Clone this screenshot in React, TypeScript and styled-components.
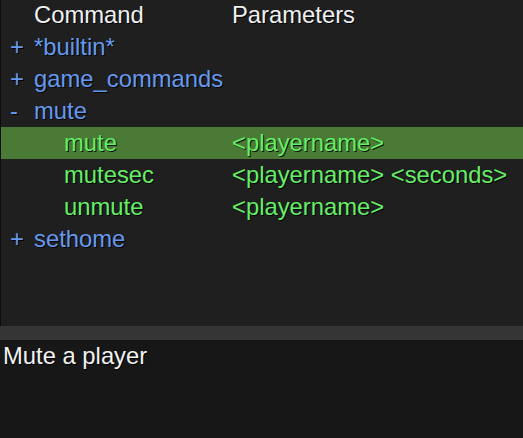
import React from "react";
import styled, { createGlobalStyle } from "styled-components";

const Global = createGlobalStyle`
  html, body { margin: 0; padding: 0; background: #171717; }
  body { width: 523px; height: 438px; overflow: hidden; font-family: "Liberation Sans", Arial, sans-serif; }
`;

const Page = styled.div`
  width: 523px;
  height: 438px;
  display: flex;
  flex-direction: column;
`;

const Tree = styled.div`
  height: 326px;
  background: #1f1f1f;
  border-left: 1px solid #0c0c0c;
  box-sizing: border-box;
  display: flex;
  flex-direction: column;
`;

const Row = styled.div<{ $header?: boolean; $selected?: boolean }>`
  height: ${(p) => (p.$header ? 31 : 32)}px;
  line-height: ${(p) => (p.$header ? 29 : 32)}px;
  display: grid;
  grid-template-columns: 33px 198px 1fr;
  font-size: 23.8px;
  white-space: nowrap;
  background: ${(p) => (p.$selected ? "#4a7a35" : "transparent")};
  text-shadow: 1px 1px 0 rgba(0, 0, 0, 0.85);
`;

const Toggle = styled.span`
  color: #6699ee;
  padding-left: 9px;
`;

const Cell = styled.span<{ $kind: "head" | "group" | "cmd"; $indent?: boolean }>`
  color: ${(p) => (p.$kind === "head" ? "#f0f0f0" : p.$kind === "group" ? "#6699ee" : "#66ee66")};
  padding-left: ${(p) => (p.$indent ? 30 : 0)}px;
`;

const Splitter = styled.div`
  height: 14px;
  background: #353535;
`;

const Info = styled.div`
  flex: 1;
  background: #171717;
  color: #f2f2f2;
  font-size: 23.8px;
  line-height: 32px;
  padding-left: 3px;
  text-shadow: 1px 1px 0 rgba(0, 0, 0, 0.85);
`;

type Item = { toggle?: string; name: string; params?: string; child?: boolean; selected?: boolean };

const items: Item[] = [
  { toggle: "+", name: "*builtin*" },
  { toggle: "+", name: "game_commands" },
  { toggle: "-", name: "mute" },
  { name: "mute", params: "<playername>", child: true, selected: true },
  { name: "mutesec", params: "<playername> <seconds>", child: true },
  { name: "unmute", params: "<playername>", child: true },
  { toggle: "+", name: "sethome" },
];

export default function App() {
  return (
    <Page>
      <Global />
      <Tree>
        <Row $header>
          <span />
          <Cell $kind="head">Command</Cell>
          <Cell $kind="head">Parameters</Cell>
        </Row>
        {items.map((it, i) => (
          <Row key={i} $selected={it.selected}>
            <Toggle>{it.toggle ?? ""}</Toggle>
            <Cell $kind={it.child ? "cmd" : "group"} $indent={it.child}>
              {it.name}
            </Cell>
            <Cell $kind="cmd">{it.params ?? ""}</Cell>
          </Row>
        ))}
      </Tree>
      <Splitter />
      <Info>Mute a player</Info>
    </Page>
  );
}
